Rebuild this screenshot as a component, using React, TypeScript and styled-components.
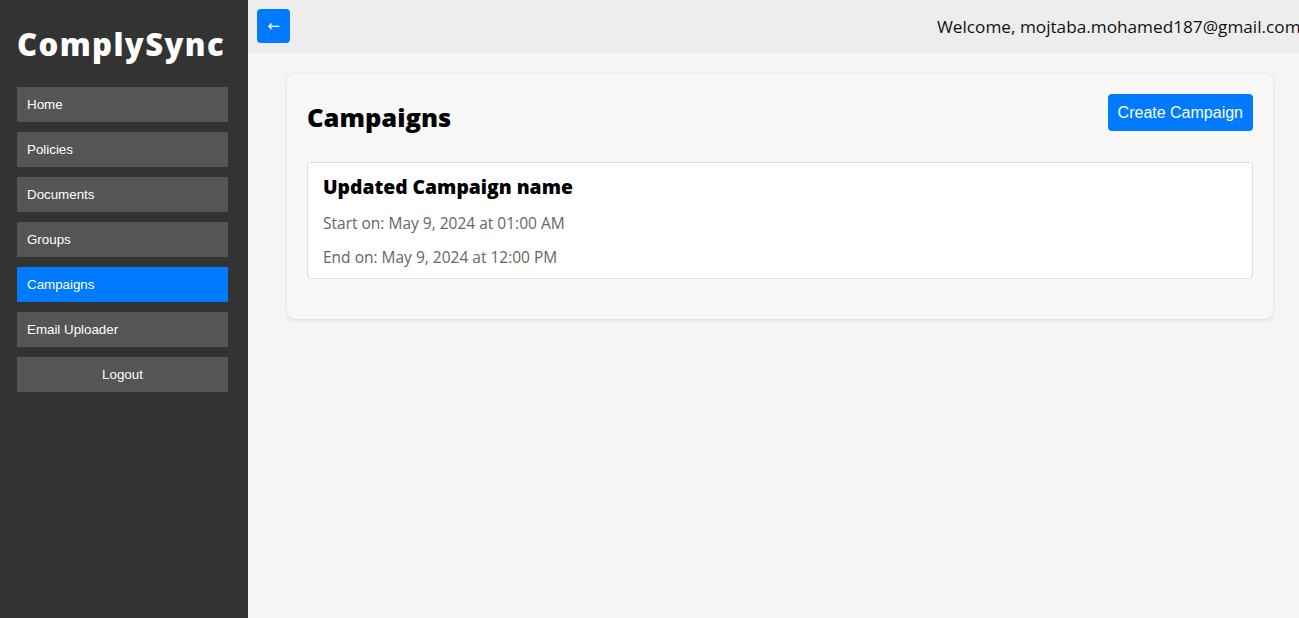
import React from "react";
import styled, { createGlobalStyle } from "styled-components";

const GlobalStyle = createGlobalStyle`
  html, body {
    margin: 0;
    padding: 0;
    height: 100%;
    overflow: hidden;
  }
  body {
    font-family: "Open Sans", "Liberation Sans", sans-serif;
    background: #f5f5f5;
  }
  #root {
    height: 100%;
  }
`;

const Shell = styled.div`
  display: flex;
  height: 618px;
  width: 1299px;
  overflow: hidden;
`;

const Sidebar = styled.aside`
  width: 248px;
  flex-shrink: 0;
  background: #333333;
  padding: 17px 20px 0 17px;
  box-sizing: border-box;
  display: flex;
  flex-direction: column;
`;

const Logo = styled.h1`
  margin: 0 0 17px 0;
  height: 53px;
  display: flex;
  align-items: center;
  color: #ffffff;
  font-family: "Open Sans", sans-serif;
  font-weight: 800;
  font-size: 31px;
  letter-spacing: 1.4px;
  white-space: nowrap;
`;

const Nav = styled.nav`
  display: flex;
  flex-direction: column;
  gap: 10px;
`;

const NavButton = styled.button<{ $active?: boolean; $center?: boolean }>`
  height: 35px;
  width: 211px;
  border: none;
  border-radius: 0;
  padding: 0 10px;
  text-align: ${(p) => (p.$center ? "center" : "left")};
  background: ${(p) => (p.$active ? "#007bff" : "#555555")};
  color: #ffffff;
  font-family: "Liberation Sans", Arial, sans-serif;
  font-size: 13.333px;
  cursor: pointer;
`;

const Main = styled.div`
  flex: 1;
  min-width: 0;
  display: flex;
  flex-direction: column;
  background: #f5f5f5;
`;

const TopBar = styled.header`
  height: 53px;
  flex-shrink: 0;
  background: #ededed;
  display: flex;
  align-items: center;
  padding-left: 9px;
  overflow: hidden;
`;

const BackButton = styled.button`
  width: 33px;
  height: 34px;
  flex-shrink: 0;
  border: none;
  border-radius: 4px;
  background: #007bff;
  color: #ffffff;
  font-family: "DejaVu Sans", sans-serif;
  font-size: 15px;
  display: flex;
  align-items: center;
  justify-content: center;
  padding: 0;
  margin-top: -1px;
`;

const Welcome = styled.span`
  margin-left: 647px;
  white-space: nowrap;
  flex-shrink: 0;
  font-family: "Open Sans", sans-serif;
  font-size: 17.2px;
  color: #111111;
  margin-top: -1px;
`;

const Content = styled.section`
  padding: 21px 26px 0 39px;
`;

const Card = styled.div`
  background: #f8f8f8;
  border-radius: 8px;
  box-shadow: 0 1px 4px rgba(0, 0, 0, 0.12);
  padding: 20px 20px 40px 20px;
`;

const CardHeader = styled.div`
  display: flex;
  justify-content: space-between;
  align-items: flex-start;
  margin-bottom: 28px;
`;

const Title = styled.h2`
  margin: 6px 0 0 0;
  font-family: "Open Sans", sans-serif;
  font-weight: 800;
  font-size: 25.5px;
  line-height: 34px;
  color: #000000;
`;

const PrimaryButton = styled.button`
  border: none;
  border-radius: 4px;
  background: #007bff;
  color: #ffffff;
  font-family: "Liberation Sans", Arial, sans-serif;
  font-size: 16px;
  padding: 0 10px;
  height: 37px;
  cursor: pointer;
`;

const CampaignItem = styled.div`
  background: #ffffff;
  border: 1px solid #dddddd;
  border-radius: 4px;
  padding: 11px 15px 4px 15px;
`;

const ItemTitle = styled.h3`
  margin: 0 0 6px 0;
  font-family: "Open Sans", sans-serif;
  font-weight: 800;
  font-size: 19.3px;
  line-height: 26px;
  color: #000000;
`;

const ItemLine = styled.p`
  margin: 0;
  font-family: "Open Sans", sans-serif;
  font-size: 15.5px;
  line-height: 34px;
  color: #666666;
`;

export default function App() {
  const nav = ["Home", "Policies", "Documents", "Groups", "Campaigns", "Email Uploader"];
  return (
    <>
      <GlobalStyle />
      <Shell>
        <Sidebar>
          <Logo>ComplySync</Logo>
          <Nav>
            {nav.map((n) => (
              <NavButton key={n} $active={n === "Campaigns"}>
                {n}
              </NavButton>
            ))}
            <NavButton $center>Logout</NavButton>
          </Nav>
        </Sidebar>
        <Main>
          <TopBar>
            <BackButton aria-label="Back">←</BackButton>
            <Welcome>Welcome, mojtaba.mohamed187@gmail.com</Welcome>
          </TopBar>
          <Content>
            <Card>
              <CardHeader>
                <Title>Campaigns</Title>
                <PrimaryButton>Create Campaign</PrimaryButton>
              </CardHeader>
              <CampaignItem>
                <ItemTitle>Updated Campaign name</ItemTitle>
                <ItemLine>Start on: May 9, 2024 at 01:00 AM</ItemLine>
                <ItemLine>End on: May 9, 2024 at 12:00 PM</ItemLine>
              </CampaignItem>
            </Card>
          </Content>
        </Main>
      </Shell>
    </>
  );
}
